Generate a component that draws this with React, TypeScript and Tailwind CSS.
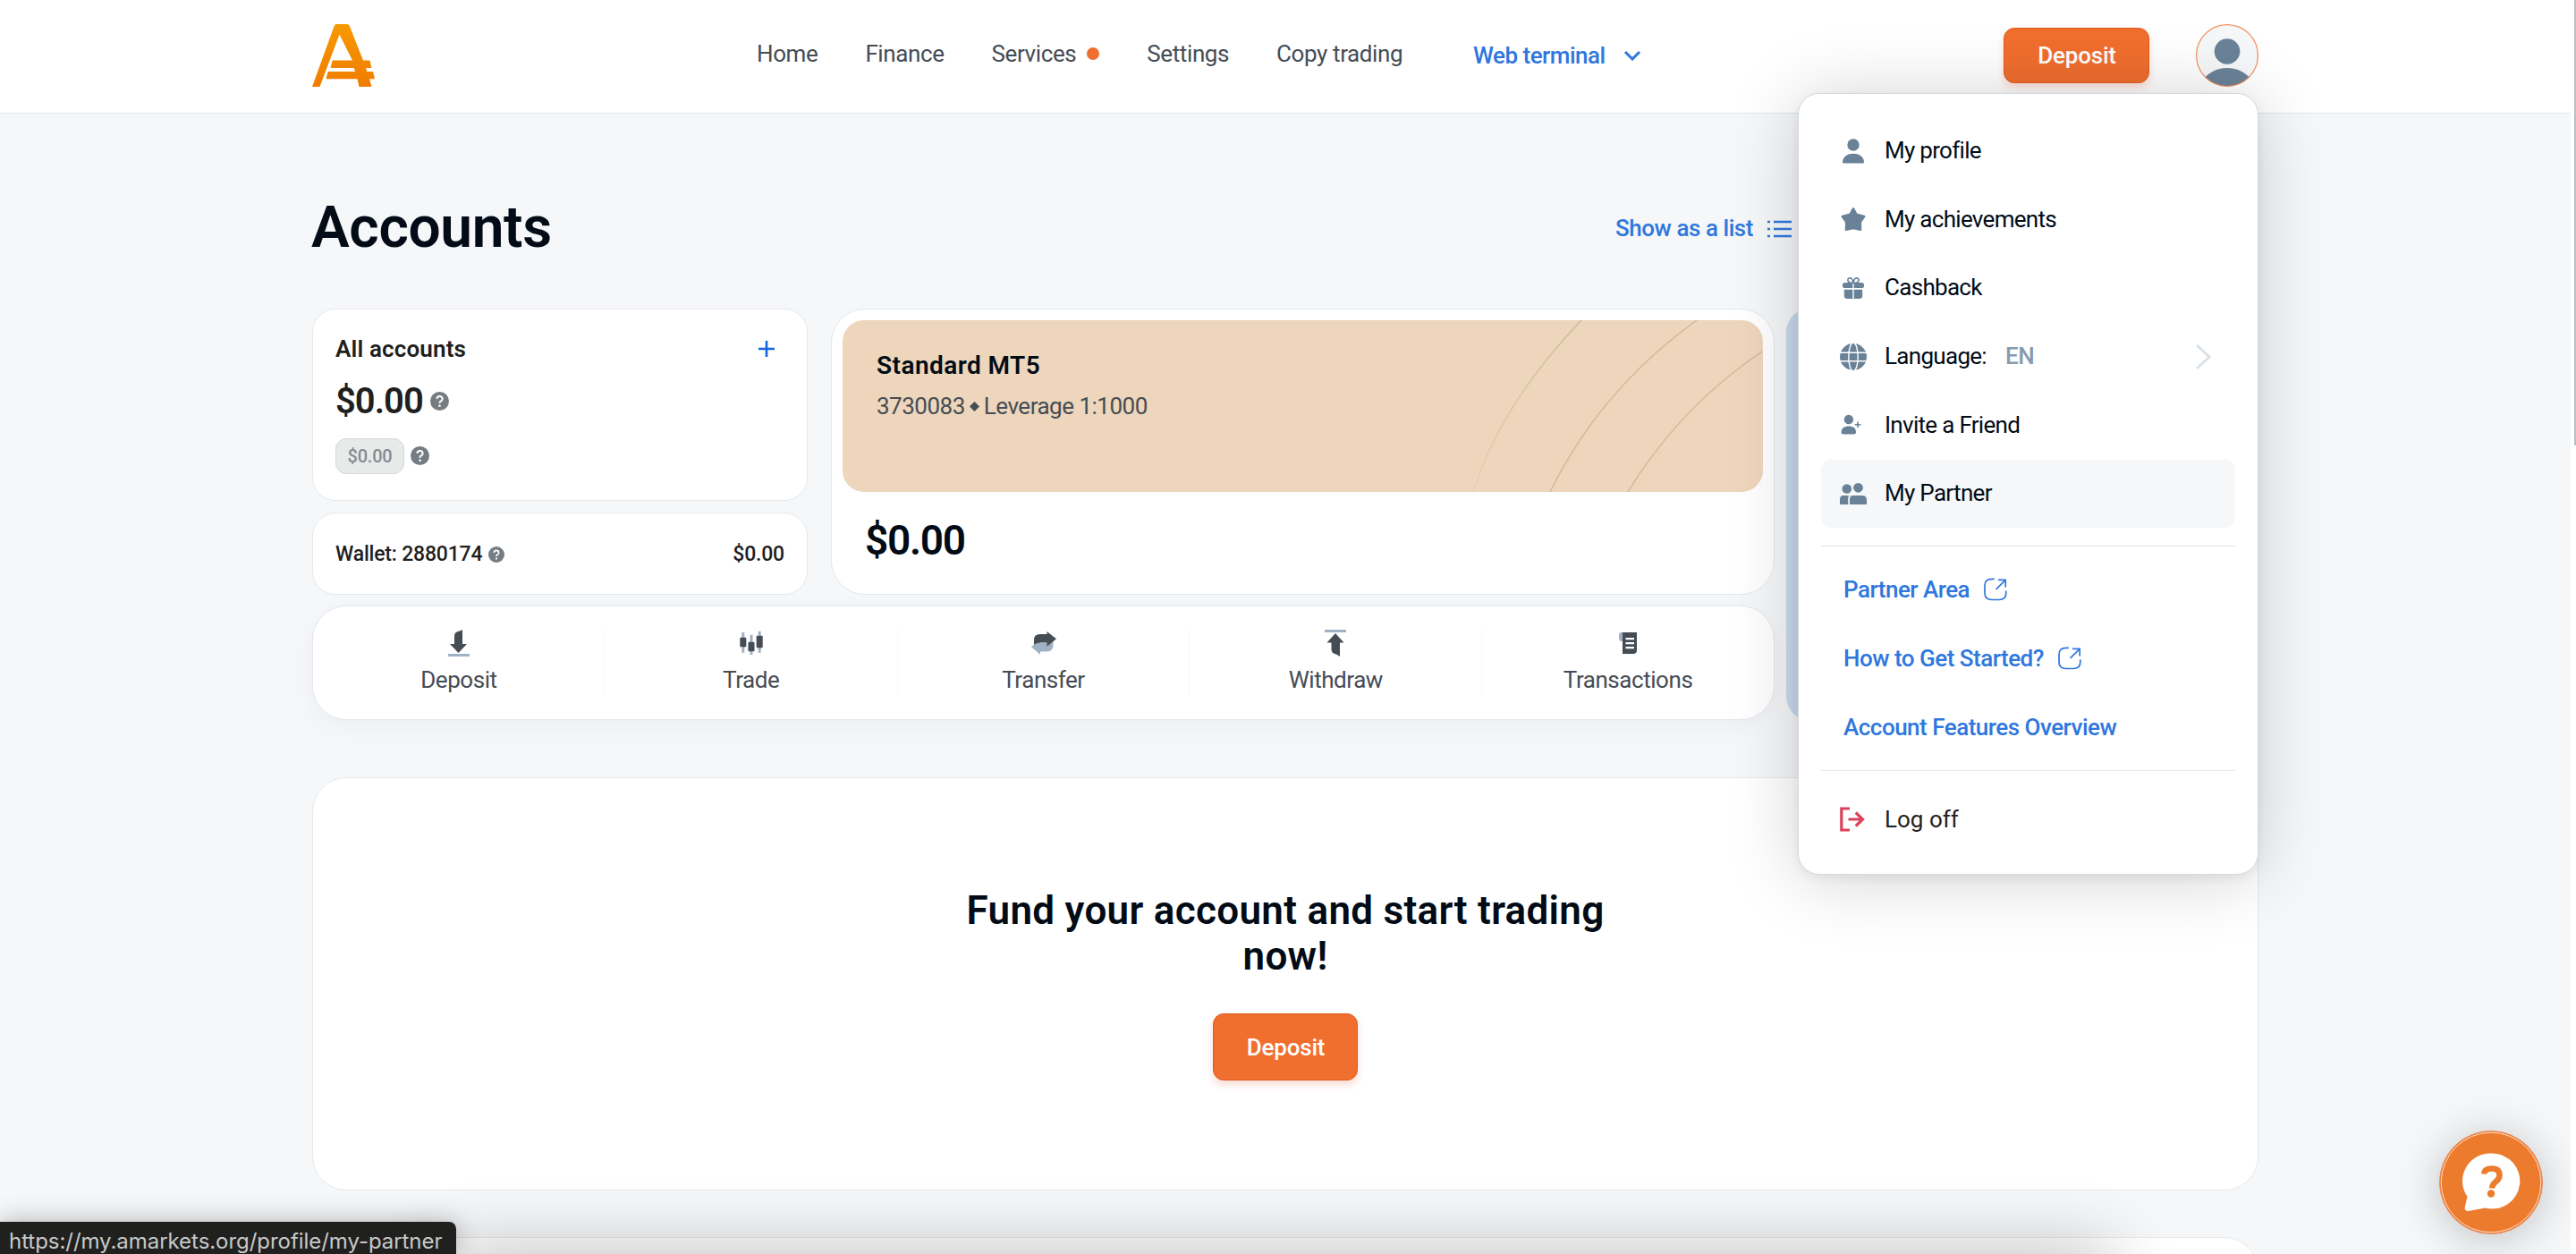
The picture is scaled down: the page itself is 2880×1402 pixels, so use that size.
import type { ReactNode } from 'react';

const NAV = ['Home', 'Finance', 'Services', 'Settings', 'Copy trading'];

function Logo() {
  return (
    <svg className="w-[70px] h-[70px]" viewBox="0 0 70 70">
      <defs>
        <linearGradient id="logo" x1="0" y1="0" x2="0" y2="1">
          <stop offset="0" stopColor="#f79a00" />
          <stop offset="1" stopColor="#f07c00" />
        </linearGradient>
      </defs>
      <path
        fill="url(#logo)"
        d="M27 0h12q2.500 0 3 2.500L57 40.500h6.500q1 0 1.300 1L66.200 49h-6l1 4h6q.8 0 1 .8L70 61.300h-6l2.500 8.700H52.500l-2-8.700h-35l2-7.500q.2-.8 1-.8h29.500l-1.200-4H20.500l1.800-7.500q.3-1 1.300-1H45L30.500 11.500 8.500 70H0L24.500 2.500Q25.200 0 27 0Z"
      />
    </svg>
  );
}

function Avatar() {
  return (
    <svg className="w-[70px] h-[70px]" viewBox="0 0 70 70">
      <clipPath id="avatar">
        <circle cx="35" cy="35" r="34.500" />
      </clipPath>
      <circle cx="35" cy="35" r="34.400" fill="#f5f7f9" />
      <g clipPath="url(#avatar)" fill="#6a8298">
        <circle cx="35" cy="30.500" r="14.300" />
        <path d="M6 64Q18 49 35 49T64 64V74H6Z" />
      </g>
      <circle cx="35" cy="35" r="34.400" fill="none" stroke="#f58a5a" strokeWidth="1.200" />
    </svg>
  );
}

// 메뉴 아이콘 (30x30)
function MenuSvg({ children, color = '#6a8298' }: { children: ReactNode; color?: string }) {
  return (
    <svg className="w-[30px] h-[30px] shrink-0" viewBox="0 0 30 30" fill={color}>
      {children}
    </svg>
  );
}

const MENU_ITEMS = [
  {
    label: 'My profile',
    icon: (
      <MenuSvg>
        <circle cx="15" cy="9" r="6.700" />
        <path d="M3 28.500C3 22 9 18.800 15 18.800S27 22 27 28.500Q27 29.500 26 29.500H4Q3 29.500 3 28.500Z" />
      </MenuSvg>
    ),
  },
  {
    label: 'My achievements',
    icon: (
      <MenuSvg>
        <path
          stroke="#6a8298"
          strokeWidth="2.500"
          strokeLinejoin="round"
          d="M15 3.300 18.600 9.800 27.200 12 22.800 18.200 23 26.800 15 25 7 26.800 7.200 18.200 2.800 12 11.400 9.800Z"
        />
      </MenuSvg>
    ),
  },
  {
    label: 'Cashback',
    icon: (
      <MenuSvg>
        <path
          fill="none"
          stroke="#6a8298"
          strokeWidth="1.700"
          d="M14.600 9.500C9.500 9.500 8.500 7 9 5.300c.7-2.500 5.600-2.300 5.600 4.200ZM15.400 9.500c5.100 0 6.100-2.500 5.600-4.200-.7-2.500-5.600-2.300-5.600 4.200Z"
        />
        <path d="M5.500 9H14.300V15H5Q3 15 3 13V11.500Q3 9 5.500 9ZM15.700 9H24.500Q27 9 27 11.500V13Q27 15 25 15H15.700ZM4.800 16.800H14.300V27H8.300Q4.800 27 4.800 23.500ZM15.700 16.800H25.200V23.500Q25.200 27 21.700 27H15.700Z" />
      </MenuSvg>
    ),
  },
  {
    label: 'Language:',
    icon: (
      <MenuSvg>
        <circle cx="15" cy="15" r="15" />
        <g fill="none" stroke="#fff" strokeWidth="1.400">
          <ellipse cx="15" cy="15" rx="5.200" ry="16" />
          <path d="M0 10.300H30M0 19.700H30" />
        </g>
      </MenuSvg>
    ),
  },
  {
    label: 'Invite a Friend',
    icon: (
      <MenuSvg>
        <circle cx="9.900" cy="8" r="5.200" />
        <path d="M4 24.500Q1.600 24.500 1.600 22.300C1.600 17.500 5 15.500 9.900 15.500S18 17.500 18 22.300Q18 24.500 15.600 24.500Z" />
        <path fill="none" stroke="#6a8298" strokeWidth="1.600" d="M20 10.500V17M16.700 13.700H23.300" />
      </MenuSvg>
    ),
  },
  {
    label: 'My Partner',
    active: true,
    icon: (
      <MenuSvg>
        <circle cx="7.800" cy="9.500" r="5.300" />
        <circle cx="20.500" cy="8.300" r="5.400" />
        <path d="M3.500 17H10Q9.200 18.500 9.200 20.500V27H0V21.500Q0 17 3.500 17ZM14.500 17H25Q30 17 30 22V27H11V21Q11 17 14.500 17Z" />
      </MenuSvg>
    ),
  },
];

function ExternalIcon() {
  return (
    <svg className="w-[26px] h-[26px]" viewBox="0 0 26 26" fill="none" stroke="#2f77dd" strokeWidth="1.700">
      <path d="M11.800 1.300H9Q1 1.300 1 9V17Q1 24.500 9 24.500H17Q24.800 24.500 24.800 17V14.500" />
      <path d="M16 2.300H24.200V10.500M24.200 2.300 13.600 12.800" />
    </svg>
  );
}

function UserMenu() {
  return (
    <div className="absolute z-20 top-[104px] left-[2010px] w-[515px] h-[874px] px-[25px] pt-[25px] rounded-3xl bg-white border border-[#d3dae2] shadow-[0_4px_12px_rgba(0,0,0,0.06),0_4px_80px_rgba(0,0,0,0.18)] text-[26px] tracking-[-0.7px]">
      {MENU_ITEMS.map((item) => (
        <div
          key={item.label}
          className={
            item.active
              ? 'h-[76px] flex items-center pl-[21px] pr-[27px] rounded-xl bg-[#f5f7f9]'
              : 'h-[76.8px] flex items-center pl-[21px] pr-[27px]'
          }
        >
          {item.icon}
          <span className="ml-[20px]">{item.label}</span>
          {item.label === 'Language:' && (
            <>
              <span className="ml-[21px] font-medium tracking-[-0.3px] text-[#869bb0]">EN</span>
              <svg className="ml-auto w-[18px] h-[30px]" viewBox="0 0 18 30" fill="none" stroke="#dae1e8" strokeWidth="3">
                <path d="M2 2 16 15 2 28" />
              </svg>
            </>
          )}
        </div>
      ))}
      <hr className="mt-[20px] mb-[10px] border-[#dfe5ea]" />
      <div className="text-[#2f77dd] font-medium tracking-[-0.5px]">
        <div className="h-[77px] flex items-center gap-[16px] pl-[25px]">
          Partner Area <ExternalIcon />
        </div>
        <div className="h-[77px] flex items-center gap-[16px] pl-[25px]">
          How to Get Started? <ExternalIcon />
        </div>
        <div className="h-[77px] flex items-center pl-[25px]">Account Features Overview</div>
      </div>
      <hr className="mt-[9px] mb-[16px] border-[#e4e7ea]" />
      <div className="h-[77px] flex items-center pl-[21px] text-[#1f1f1f] tracking-[0px]">
        <svg className="w-[30px] h-[30px]" viewBox="0 0 30 30" fill="none" stroke="#d9435c" strokeWidth="3.200">
          <path d="M11 3H1.800V27H11M9.500 15H26M17.800 7.500 25.500 15 17.800 22.500" />
        </svg>
        <span className="ml-[20px]">Log off</span>
      </div>
    </div>
  );
}

function Header() {
  return (
    <header className="h-[127px] pb-[2px] pl-[349px] flex items-center bg-white border-b border-[#dfe5ea]">
      <Logo />
      <nav className="ml-[427px] mb-1 w-[724px] flex items-center gap-[53px] text-[26px] tracking-[-0.4px] text-[#454c54]">
        {NAV.map((label) => (
          <a key={label} className="flex items-center whitespace-nowrap">
            {label}
            {label === 'Services' && <i className="ml-3 size-[14px] rounded-full bg-[#f06e2e]" />}
          </a>
        ))}
      </nav>
      <div className="ml-[77px] flex items-center text-[26px] font-medium tracking-[-0.5px] text-[#2f77dd]">
        Web terminal
        <svg className="ml-5 w-5 h-3" viewBox="0 0 20 12" fill="none" stroke="#2f77dd" strokeWidth="3">
          <path d="M2 2 10 10 18 2" />
        </svg>
      </div>
      <button className="ml-auto w-[163px] h-[62px] pl-px rounded-xl bg-[#f06e2e] border border-[#dd5d1f] text-white text-[26px] font-medium tracking-[-0.2px] shadow-[0_5px_8px_rgba(240,80,40,0.2)]">
        Deposit
      </button>
      <div className="ml-[52px] mr-[355px]">
        <Avatar />
      </div>
    </header>
  );
}

function Help({ className }: { className: string }) {
  return (
    <svg className={className} viewBox="0 0 20 20">
      <circle cx="10" cy="10" r="10" fill="#757c82" />
      <path d="M7 7.600Q7.300 4.800 10 4.800T13 7.500Q13 8.900 11.400 9.900T10 12.300" fill="none" stroke="#fff" strokeWidth="1.900" />
      <circle cx="10" cy="15" r="1.250" fill="#fff" />
    </svg>
  );
}

const ACTIONS = [
  {
    label: 'Deposit',
    icon: (
      <>
        <path fill="#454c54" d="M20 1V17H25L15.500 27 6 17H11V8Q11 4 15 3Q18 2.300 20 1Z" />
        <path fill="#9fb2c5" d="M4 28H28V31H4Z" />
      </>
    ),
  },
  {
    label: 'Trade',
    icon: (
      <>
        <path stroke="#9fb2c5" strokeWidth="3" d="M6.800 4V26.700M16 6.700V29M25.200 2.700V26.700" />
        <g fill="#454c54">
          <rect x="3.300" y="9.700" width="7" height="10.500" rx="1" />
          <rect x="12.500" y="14.700" width="7" height="10.500" rx="1" />
          <rect x="21.700" y="7.700" width="7" height="13.500" rx="1" />
        </g>
      </>
    ),
  },
  {
    label: 'Transfer',
    icon: (
      <>
        <path fill="#9fb2c5" d="M13 12V16H20Q26 16 27.500 11.500V18Q27.500 25.500 20 25.500H13V29L3 20.300Z" />
        <path fill="#454c54" d="M20.500 3 31 11.300 20.500 19.700V15.500H14Q8 15.500 6 18V12Q6 6 13 6H20.500Z" />
      </>
    ),
  },
  {
    label: 'Withdraw',
    icon: (
      <>
        <path fill="#9fb2c5" d="M4 1H28V4H4Z" />
        <path fill="#454c54" d="M16 5 25.500 15.500H21V31Q19 29.500 17 28.500Q11.500 27.500 11.500 23V15.500H6.500Z" />
      </>
    ),
  },
  {
    label: 'Transactions',
    icon: (
      <>
        <path fill="#9fb2c5" d="M10 4V14H8Q6 13 6 11V6Q6 4 10 4Z" />
        <path fill="#454c54" d="M9 4H26V24Q26 28 22 28H10V5Z" />
        <path stroke="#fff" strokeWidth="2.200" d="M13.500 11.200H23M13.500 16.200H23M13.500 21.200H23" />
      </>
    ),
  },
];

function MainCards() {
  return (
    <div className="mt-[50px] h-[460px] flex gap-[13px]">
      <div className="w-[1635px] flex flex-col gap-3">
        <div className="h-[320px] flex gap-[26px]">
          <div className="w-[554px] flex flex-col gap-[13px] font-medium text-[#1f1f1f]">
            <section className="h-[215px] rounded-[26px] bg-white border border-[#e6e9ec] pl-[25px] pt-6">
              <div className="h-10 pr-[35px] flex items-center justify-between text-[26px] font-semibold tracking-[0.15px]">
                All accounts
                <svg className="w-[20px] h-[20px]" viewBox="0 0 20 20" stroke="#1264e0" strokeWidth="2.600">
                  <path d="M10 1V19M1 10H19" />
                </svg>
              </div>
              <div className="mt-[15px] h-12 flex items-center text-[40px] font-semibold tracking-[-1px]">
                $0.00 <Help className="ml-[8px] mb-[2px] size-[21px]" />
              </div>
              <div className="mt-[17px] flex items-center">
                <span className="w-[77px] h-10 flex items-center justify-center rounded-xl bg-[#e8eaea] border border-[#d4d7d8] text-[20px] tracking-[-0.2px] text-[#858b91]">
                  $0.00
                </span>
                <Help className="ml-[7px] mb-px size-[21px]" />
              </div>
            </section>
            <section className="h-[92px] rounded-[26px] bg-white border border-[#e6e9ec] pl-[25px] pr-[25px] pt-[2px] flex items-center text-[23px] tracking-[-0.2px]">
              Wallet: 2880174 <Help className="ml-[7px] size-[18px]" />
              <span className="ml-auto">$0.00</span>
            </section>
          </div>

          <section className="flex-1 rounded-[38px] bg-white border border-[#e3e8ec] p-3">
            <div className="relative h-[192px] rounded-3xl overflow-hidden bg-[#edd6bc] pl-[38px] pt-[34px]">
              <svg className="absolute inset-0 w-[1028px] h-[192px]" viewBox="0 0 1028 192" fill="none" strokeWidth="1.300">
                <defs>
                  <linearGradient id="fade" x1="0" y1="0" x2="0" y2="1">
                    <stop offset="0" stopColor="#c9b798" />
                    <stop offset="1" stopColor="#e6d0b4" />
                  </linearGradient>
                </defs>
                <path stroke="url(#fade)" d="M826 0Q736 94 705 192" />
                <path stroke="#cdb899" d="M955 0Q847 78 791 192" />
                <path stroke="#cdb899" d="M1028 35Q936 97 878 192" />
              </svg>
              <h2 className="h-[34px] leading-[34px] text-[28px] font-semibold tracking-[0.45px]">Standard MT5</h2>
              <p className="mt-[12px] h-[32px] flex items-center text-[26px] tracking-[-0.5px] text-[#454c54]">
                3730083
                <svg className="mx-[5px] w-[11px] h-[11px]" viewBox="0 0 11 11" fill="#454c54">
                  <path d="M5.500 0 11 5.500 5.500 11 0 5.500Z" />
                </svg>
                Leverage 1:1000
              </p>
            </div>
            <div className="mt-[26px] pl-[25px] leading-[56px] text-[46px] font-semibold tracking-[-1.3px]">$0.00</div>
          </section>
        </div>

        <section className="h-[128px] rounded-[38px] bg-white border border-[#e3e8ee] flex items-center shadow-[0_8px_30px_rgba(0,0,0,0.04)]">
          {ACTIONS.map((action) => (
            <div
              key={action.label}
              className="flex-1 h-[78px] flex flex-col items-center border-r border-[#f8f9fa] last:border-r-0 text-[26px] tracking-[-0.45px] text-[#454c54]"
            >
              <svg className="mt-[1px] w-8 h-8 shrink-0" viewBox="0 0 32 32">
                {action.icon}
              </svg>
              <span className="mt-[8px] leading-[34px]">{action.label}</span>
            </div>
          ))}
        </section>
      </div>
      <section className="flex-1 rounded-[26px] bg-[#c8daeb]" />
    </div>
  );
}

export default function App() {
  return (
    <div className="relative h-[1402px] overflow-hidden bg-[#f5f7f9] font-[Roboto,sans-serif] text-[#020b16]">
      <Header />
      <main className="w-[2176px] ml-[349px] pt-[88px]">
        <div className="h-20 flex items-center">
          <h1 className="-ml-px text-[64px] leading-[80px] font-semibold tracking-[-0.35px]">Accounts</h1>
          <div className="ml-auto mr-[522px] mt-[1px] flex items-center text-[26px] font-medium tracking-[-0.45px] text-[#2f77dd]">
            Show as a list
            <svg className="ml-4 w-[27px] h-[20px]" viewBox="0 0 27 20" stroke="#2f77dd" strokeWidth="2.600">
              <path d="M0 2H3M0 10H3M0 18H3M7 2H27M7 10H27M7 18H27" />
            </svg>
          </div>
        </div>

        <MainCards />

        <section className="mt-[64px] h-[462px] rounded-[38px] bg-white border border-[#e6e8ea] flex flex-col items-center">
          <h2 className="mt-[123px] w-[760px] text-center text-[44px] leading-[51px] font-semibold tracking-[0.3px]">
            Fund your account and start trading now!
          </h2>
          <button className="mt-[38px] w-[162px] h-[75px] pl-px pt-px rounded-xl bg-[#f06e2e] border border-[#dd5d1f] text-white text-[26px] font-medium tracking-[-0.2px] shadow-[0_5px_8px_rgba(240,80,40,0.2)]">
            Deposit
          </button>
        </section>
        <section className="mt-[52px] h-[200px] rounded-[38px] bg-white border border-[#e6e8ea]" />
      </main>

      <UserMenu />

      {/* 하단 그림자 */}
      <div className="absolute left-[500px] top-[1402px] w-[1860px] h-[60px] shadow-[0_0_80px_rgba(0,0,0,0.3)]" />

      {/* 채팅 버튼 */}
      <div className="absolute left-[2727px] top-[1264px] size-[116px] rounded-full bg-[#ec7b2e] border border-[#f08a5a] shadow-[0_6px_50px_rgba(0,0,0,0.22)] flex">
        <svg className="size-full" viewBox="0 0 114 114">
          <circle cx="57" cy="57" r="55.800" fill="none" stroke="#fff" strokeOpacity="0.750" strokeWidth="1" />
          <path
            fill="#fff"
            d="M58 24.500A31 31 0 1 1 50.500 85.500L31.500 89Q27 89 27.800 84.500L30.500 73A31 31 0 0 1 58 24.500Z"
          />
          <path d="M49 47.500Q49.500 41.500 58 41.500T66.500 49Q66.500 53 62.500 56T58 63.500" fill="none" stroke="#ec7b2e" strokeWidth="6.500" />
          <circle cx="57" cy="69.500" r="4.200" fill="#ec7b2e" />
        </svg>
      </div>

      {/* 스크롤바 */}
      <div className="absolute right-0 top-0 w-[6px] h-full bg-white" />
      <div className="absolute right-0 top-0 w-[2px] h-[498px] bg-[#b9bec4]" />

      {/* 상태 표시줄 */}
      <div className="absolute left-0 top-[1366px] w-[510px] h-9 pl-[10px] rounded-tr-lg bg-[#20211f] shadow-[0_0_30px_rgba(0,0,0,0.3)] font-[Inter,sans-serif] text-[24px] leading-[43px] tracking-[-0.05px] whitespace-nowrap text-[#c8c9c8]">
        https://my.amarkets.org/profile/my-partner
      </div>
    </div>
  );
}
